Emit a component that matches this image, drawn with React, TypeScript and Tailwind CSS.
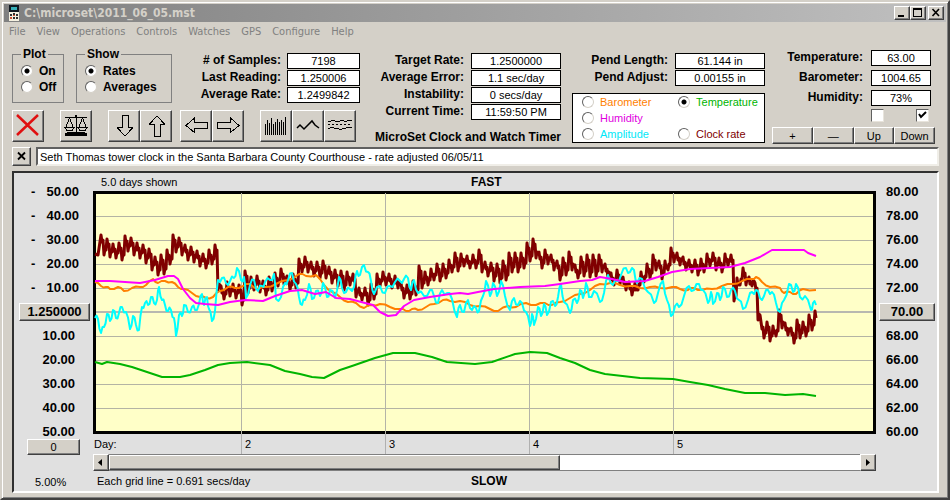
import React, { useState } from 'react';
import clsx from 'clsx';

const raised =
  'bg-[#d4d0c8] border border-t-white border-l-white border-r-[#404040] border-b-[#404040] shadow-[inset_-1px_-1px_0_#808080]';

const plainText = 'text-[11px] font-normal';

type Point = [number, number];

// [peak, trough] for every hour of the run
const clockRate: Point[] = [
  [235, 255], [239, 257], [244, 258], [243, 260], [236, 251], [238, 255], [243, 258], [245, 263],
  [249, 270], [257, 275], [255, 274], [250, 264], [235, 252], [238, 255], [245, 260], [247, 262],
  [251, 266], [254, 268], [250, 264], [245, 290], [286, 299], [282, 296], [284, 298], [285, 305],
  [271, 293], [277, 290], [276, 292], [281, 295], [277, 291], [273, 286], [269, 284], [276, 290],
  [274, 288], [259, 272], [257, 272], [262, 276], [262, 278], [261, 278], [267, 283], [270, 286],
  [271, 290], [272, 285], [274, 297], [288, 300], [288, 305], [284, 299], [274, 286], [272, 285],
  [274, 288], [276, 288], [283, 298], [285, 299], [281, 295], [266, 288], [272, 285], [269, 280],
  [264, 281], [264, 278], [260, 272], [253, 271], [254, 266], [256, 268], [255, 268], [250, 272],
  [262, 276], [263, 281], [264, 283], [261, 280], [253, 272], [253, 272], [253, 268], [243, 261],
  [239, 258], [252, 268], [250, 264], [255, 270], [261, 280], [258, 275], [252, 270], [265, 278],
  [257, 276], [255, 277], [255, 276], [255, 272], [264, 278], [273, 285], [270, 284], [277, 290],
  [282, 295], [283, 290], [272, 282], [264, 278], [255, 270], [261, 279], [261, 270], [248, 262],
  [253, 265], [257, 270], [260, 272], [260, 275], [259, 272], [254, 266], [253, 270], [258, 272],
  [254, 266], [255, 301], [278, 285], [268, 285], [277, 286], [283, 320], [322, 338], [322, 341],
  [326, 336], [310, 328], [323, 335], [328, 343], [320, 338], [322, 336], [315, 330], [311, 319],
];

const amplitude: Point[] = [
  [95, 318], [98, 319], [101, 333], [104, 327], [107, 314], [110, 321], [113, 310], [116, 318], [119, 313],
  [122, 307], [126, 312], [130, 329], [133, 316], [136, 325], [139, 330], [142, 307], [145, 303], [148, 305],
  [151, 297], [154, 303], [157, 300], [159, 287], [162, 300], [165, 305], [168, 311], [171, 310], [174, 318],
  [176, 336], [179, 315], [182, 316], [184, 305], [188, 312], [192, 307], [195, 310], [199, 304], [202, 294],
  [204, 305], [207, 297], [209, 309], [212, 321], [215, 311], [218, 280], [222, 278], [226, 283], [230, 281],
  [234, 278], [237, 268], [241, 280], [244, 277], [246, 298], [250, 285], [254, 280], [258, 291], [262, 286],
  [265, 282], [270, 280], [274, 274], [276, 299], [281, 297], [285, 283], [288, 280], [292, 273], [296, 284],
  [299, 297], [302, 305], [305, 300], [309, 284], [312, 299], [316, 291], [320, 296], [323, 283], [327, 297],
  [330, 290], [335, 298], [339, 277], [342, 288], [346, 292], [350, 289], [354, 287], [357, 271], [360, 275],
  [364, 265], [368, 272], [371, 281], [374, 294], [380, 286], [385, 293], [390, 286], [395, 282], [400, 281],
  [404, 279], [408, 278], [411, 290], [414, 280], [418, 293], [424, 296], [430, 290], [434, 296], [438, 303],
  [442, 290], [447, 293], [452, 299], [457, 317], [460, 305], [464, 312], [468, 300], [472, 310], [476, 308],
  [479, 311], [483, 296], [486, 281], [490, 296], [493, 283], [497, 296], [501, 281], [505, 296], [510, 310],
  [514, 298], [518, 305], [522, 303], [526, 312], [530, 326], [532, 314], [534, 325], [538, 307], [541, 316],
  [544, 304], [547, 315], [551, 302], [555, 306], [558, 297], [561, 284], [564, 302], [570, 313], [573, 300],
  [577, 303], [580, 290], [583, 298], [586, 283], [589, 297], [594, 291], [600, 302], [604, 293], [608, 275],
  [613, 285], [617, 281], [621, 275], [626, 268], [630, 272], [634, 270], [637, 283], [642, 279], [648, 292],
  [654, 303], [658, 293], [663, 281], [667, 300], [671, 316], [675, 306], [679, 307], [684, 296], [689, 286],
  [694, 290], [699, 284], [703, 290], [708, 303], [711, 292], [713, 304], [717, 293], [720, 300], [723, 287],
  [727, 297], [731, 290], [735, 291], [739, 300], [743, 309], [748, 300], [752, 292], [756, 290], [760, 298],
  [764, 296], [768, 290], [772, 292], [776, 303], [780, 312], [784, 300], [789, 284], [793, 292], [796, 284],
  [800, 297], [805, 296], [811, 310], [813, 303], [816, 305],
];

const barometer: Point[] = [
  [95, 282], [101, 286], [106, 287], [110, 289], [118, 287], [124, 291], [132, 288], [140, 287], [146, 285],
  [153, 279], [158, 283], [165, 281], [172, 282], [178, 287], [184, 289], [192, 293], [200, 297], [206, 298],
  [213, 297], [220, 291], [228, 287], [235, 288], [243, 286], [250, 284], [258, 289], [266, 287], [276, 284],
  [288, 280], [299, 274], [306, 276], [316, 275], [324, 285], [332, 292], [340, 297], [348, 302], [356, 303],
  [364, 308], [372, 305], [380, 304], [390, 307], [400, 309], [406, 311], [412, 309], [418, 310], [426, 307],
  [434, 304], [443, 300], [450, 301], [460, 301], [470, 305], [480, 306], [490, 309], [498, 311], [508, 306],
  [516, 307], [526, 303], [536, 305], [545, 303], [552, 305], [560, 302], [570, 298], [580, 294], [590, 290],
  [600, 284], [610, 283], [620, 285], [630, 286], [640, 288], [650, 287], [660, 288], [672, 287], [680, 289],
  [688, 290], [694, 288], [702, 290], [712, 289], [722, 286], [733, 284], [742, 281], [752, 279], [756, 277],
  [762, 282], [770, 287], [780, 288], [784, 293], [790, 292], [796, 294], [803, 289], [816, 290],
];

const humidity: Point[] = [
  [95, 281], [110, 281], [125, 282], [140, 283], [155, 280], [168, 276], [174, 276], [178, 279], [183, 289],
  [190, 298], [196, 303], [205, 304], [218, 305], [230, 302], [245, 300], [263, 301], [275, 296], [290, 291],
  [302, 290], [315, 294], [326, 292], [336, 298], [350, 299], [365, 303], [373, 305], [380, 312], [388, 316],
  [396, 315], [404, 306], [414, 300], [430, 297], [450, 294], [460, 293], [468, 294], [478, 292], [494, 289],
  [520, 287], [545, 286], [560, 284], [580, 281], [592, 280], [600, 277], [612, 279], [625, 282], [645, 281],
  [658, 277], [672, 272], [690, 269], [710, 268], [730, 267], [745, 263], [760, 257], [772, 250], [804, 250],
  [808, 253], [816, 256],
];

const temperature: Point[] = [
  [95, 362], [102, 364], [107, 362], [120, 364], [132, 367], [150, 373], [162, 377], [180, 377], [190, 375],
  [205, 370], [218, 365], [230, 363], [247, 362], [270, 365], [285, 371], [300, 374], [312, 377], [324, 378],
  [340, 370], [352, 366], [375, 358], [393, 353], [415, 353], [432, 357], [447, 362], [475, 364], [492, 362],
  [515, 354], [530, 352], [547, 353], [560, 358], [575, 363], [590, 370], [605, 374], [640, 378], [673, 379],
  [690, 382], [708, 385], [725, 389], [745, 393], [765, 393], [785, 395], [803, 394], [816, 396],
];

const clockPoints: Point[] = [[95, 254], [98, 255]];
clockRate.forEach(([peak, trough], i) => {
  const x = 101 + i * 6;
  clockPoints.push([x, peak], [x + 1, peak + 7], [x + 2, peak + 5], [x + 3, trough], [x + 4, trough - 6], [x + 5, trough - 5]);
});

// breaks every segment with a small kink
const roughen = (data: Point[], size: number): Point[] =>
  data.flatMap(([x, y], i) => {
    const next = data[i + 1];
    if (!next) return [[x, y] as Point];
    const kink = i % 2 ? size : -size;
    return [[x, y], [(x + next[0]) / 2, (y + next[1]) / 2 + kink]] as Point[];
  });

const series = [
  { name: 'Clock rate', color: '#800000', width: 3, data: clockPoints.filter(([x]) => x < 817) },
  { name: 'Barometer', color: '#ff8000', width: 2, data: roughen(barometer, 1) },
  { name: 'Amplitude', color: '#00ffff', width: 2, data: roughen(amplitude, 3) },
  { name: 'Humidity', color: '#ff00ff', width: 2, data: humidity },
  { name: 'Temperature', color: '#00b400', width: 2, data: temperature },
];

const channels = [
  { name: 'Barometer', className: 'text-[#ff8000]' },
  { name: 'Temperature', className: 'text-[#00b400]' },
  { name: 'Humidity', className: 'text-[#e000e0]' },
  null,
  { name: 'Amplitude', className: 'text-[#00e8f8]' },
  { name: 'Clock rate', className: 'text-[#800000]' },
];

const menu = ['File', 'View', 'Operations', 'Controls', 'Watches', 'GPS', 'Configure', 'Help'];

const tools = [
  {
    label: 'Stop',
    gap: 'mr-4',
    icon: <path d="M4 4 L25 24 M25 4 L4 24" stroke="#e01010" strokeWidth="2.5" shapeRendering="auto" />,
  },
  {
    label: 'Balance',
    gap: 'mr-4',
    icon: (
      <g stroke="#000">
        <path d="M4 6.5 H14 L15 4 L16 6.5 H26 M15 4 V21 M8.5 7 L4.5 17 M8.5 7 L12.5 17 M21.5 7 L17.5 17 M21.5 7 L25.5 17" />
        <path d="M4 16.5 H13 L11 19.5 H6 Z M17 16.5 H26 L24 19.5 H19 Z" />
        <path d="M6 21 H24 V22 H26 V25 H4 V22 H6 Z" fill="#000" stroke="none" />
      </g>
    ),
  },
  {
    label: 'Shift down',
    gap: '',
    icon: <path d="M13 4.5 H19 V16.5 H23.5 V17 L16 25 L8.5 17 V16.5 H13 Z" stroke="#000" />,
  },
  {
    label: 'Shift up',
    gap: 'mr-2',
    icon: <path d="M13 25.5 H19 V13.5 H23.5 V13 L16 5 L8.5 13 V13.5 H13 Z" stroke="#000" />,
  },
  {
    label: 'Shift left',
    gap: '',
    icon: <path d="M26.5 11.5 V17.5 H13.5 V21.5 L5 14.5 L13.5 7 V11.5 Z" stroke="#000" />,
  },
  {
    label: 'Shift right',
    gap: 'mr-4',
    icon: <path d="M4.5 11.5 V17.5 H17.5 V21.5 L26 14.5 L17.5 7 V11.5 Z" stroke="#000" />,
  },
  {
    label: 'Bars',
    gap: '',
    icon: (
      <path
        d="M4.5 24 V13 M6.5 24 V9 M8.5 24 V12 M10.5 24 V7 M12.5 24 V13 M14.5 24 V11 M16.5 24 V8 M18.5 24 V11 M20.5 24 V9 M22.5 24 V11 M24.5 24 V6"
        stroke="#000"
      />
    ),
  },
  {
    label: 'Line',
    gap: '',
    icon: <path d="M4 17 L7 14 L11 18 L19 10 L22 14 L26 17" stroke="#000" strokeWidth="1.5" shapeRendering="auto" />,
  },
  {
    label: 'Bands',
    gap: '',
    icon: (
      <path
        d="M3 10.5 H6 M6 9.5 H10 M10 10.5 H15 M15 9.5 H19 M19 10.5 H22 M22 9.5 H27 M3 17.5 H5 M5 16.5 H9 M9 17.5 H14 M14 18.5 H17 M17 17.5 H21 M21 16.5 H27 M3 13.5 H5 M7 13.5 H9 M11 13.5 H13 M15 13.5 H17 M19 13.5 H21 M23 13.5 H25"
        stroke="#000"
      />
    ),
  },
];

function Radio({ name, label, checked, onChange, className }: {
  name: string;
  label: string;
  checked: boolean;
  onChange: () => void;
  className?: string;
}) {
  return (
    <label className={clsx('flex h-4 items-center gap-[6px] whitespace-nowrap', className)}>
      <input
        type="radio"
        name={name}
        checked={checked}
        onChange={onChange}
        className="h-3 w-3 shrink-0 appearance-none rounded-full border border-t-[#606060] border-l-[#606060] border-r-[#d4d0c8] border-b-[#d4d0c8] bg-white checked:bg-[radial-gradient(circle,#000_2px,#fff_3px)]"
      />
      {label}
    </label>
  );
}

function Readouts({ rows, className }: { rows: [string, string][]; className: string }) {
  return (
    <div className={clsx('grid auto-rows-[16px] justify-end', className)}>
      {rows.map(([label, value]) => {
        const id = label.replace(/\W+/g, '-').toLowerCase();
        return (
          <React.Fragment key={label}>
            <label htmlFor={id} className="text-right font-bold leading-[14px] whitespace-nowrap">
              {label}
            </label>
            <output id={id} className={clsx('border border-black bg-white text-center leading-[14px] whitespace-nowrap', plainText)}>
              {value}
            </output>
          </React.Fragment>
        );
      })}
    </div>
  );
}

function TitleBar() {
  return (
    <header className="flex h-[18px] items-center bg-linear-to-r from-[#808080] to-[#c0c0c0] pr-[2px] pl-1">
      <svg width="12" height="16" viewBox="0 0 12 16" shapeRendering="crispEdges" aria-hidden="true">
        <path d="M1 0 H11 V16 H1 Z" fill="#f4f0e0" />
        <path d="M1 0 H11 V7 H1 Z" fill="#101820" />
        <path d="M3 2 H9 V5 H3 Z" fill="#38b0b8" />
        <path d="M2 9 H4 V11 H2 Z M5 8 H7 V10 H5 Z M8 9 H10 V11 H8 Z M5 12 H7 V14 H5 Z M8 12 H10 V14 H8 Z" fill="#303030" />
        <path d="M2 12 H4 V14 H2 Z M5 10 H7 V11 H5 Z" fill="#d05030" />
      </svg>
      <h1 className="ml-1 flex-1 font-['DejaVu_Sans_Condensed','DejaVu_Sans',sans-serif] text-xs font-bold text-[#d4d0c8]">
        C:\microset\2011_06_05.mst
      </h1>
      <button aria-label="Minimize" className={clsx('h-[14px] w-4', raised)}>
        <svg viewBox="0 0 14 12" shapeRendering="crispEdges">
          <path d="M3 8 H9 V10 H3 Z" />
        </svg>
      </button>
      <button aria-label="Maximize" className={clsx('h-[14px] w-4', raised)}>
        <svg viewBox="0 0 14 12" shapeRendering="crispEdges">
          <path d="M2 1 H11 V10 H2 Z M3 3 V9 H10 V3 Z" fillRule="evenodd" />
        </svg>
      </button>
      <button aria-label="Close" className={clsx('ml-[2px] h-[14px] w-4', raised)}>
        <svg viewBox="0 0 14 12">
          <path d="M3.5 2 L10 9 M10 2 L3.5 9" stroke="#000" strokeWidth="1.6" />
        </svg>
      </button>
    </header>
  );
}

function Checkbox({ label, defaultChecked }: { label: string; defaultChecked?: boolean }) {
  return (
    <span className="relative block h-[13px] w-[13px]">
      <input
        type="checkbox"
        aria-label={label}
        defaultChecked={defaultChecked}
        className="peer block h-full w-full appearance-none border border-t-[#606060] border-l-[#606060] border-r-[#e8e4dc] border-b-[#e8e4dc] bg-white"
      />
      <svg viewBox="0 0 13 13" className="pointer-events-none absolute inset-0 hidden peer-checked:block">
        <path d="M3 5 L5 8 L10 3" fill="none" stroke="#000" strokeWidth="2" />
      </svg>
    </span>
  );
}

function Plot() {
  return (
    <svg viewBox="93 191 783 243" preserveAspectRatio="none" className="block h-[243px] w-full" role="img" aria-label="Clock rate over five days">
      <g shapeRendering="crispEdges">
        <rect x="93" y="191" width="783" height="243" fill="#000" />
        <rect x="96" y="194" width="777" height="237" fill="#ffffc8" />
        {[216, 240, 264, 288, 336, 360, 384, 408].map(y => (
          <rect key={y} x="96" y={y} width="777" height="1" fill="#b4b4a4" />
        ))}
        <rect x="96" y="311" width="777" height="2" fill="#b8b8b0" />
        {[241, 385, 529, 673].map(x => (
          <rect key={x} x={x} y="193" width="1" height="241" fill="#b4b4a8" />
        ))}
      </g>
      {series.map(line => (
        <polyline
          key={line.name}
          points={line.data.map(p => p.join(',')).join(' ')}
          fill="none"
          stroke={line.color}
          strokeWidth={line.width}
          strokeLinejoin="round"
          vectorEffect="non-scaling-stroke"
        />
      ))}
    </svg>
  );
}

function Scale({ side }: { side: 'left' | 'right' }) {
  const left = side === 'left';
  return (
    <div className="flex flex-col pt-[7px] text-[13px] font-bold">
      {[5, 4, 3, 2, 1, 0, -1, -2, -3, -4, -5].map(n => {
        if (n === 0) {
          return (
            <div key={n} className={clsx('flex h-6 items-center', left ? 'pr-[3px] pl-[5px]' : 'pr-[2px] pl-[3px]')}>
              <button className={clsx('h-[18px] flex-1 text-center leading-4', raised)}>
                {left ? '1.250000' : '70.00'}
              </button>
            </div>
          );
        }
        return (
          <div
            key={n}
            className={clsx(
              'flex leading-[14px]',
              n === -5 ? 'h-[19px] items-end' : 'h-6 items-center',
              left ? 'justify-between pl-[17px]' : 'pl-[10px]',
              left && (n > 0 ? 'pr-[14px]' : 'pr-[18px]')
            )}
          >
            {left && <span>{n > 0 ? '-' : ''}</span>}
            <span>{left ? `${Math.abs(n) * 10}.00` : `${70 + n * 2}.00`}</span>
          </div>
        );
      })}
      {left && (
        <>
          <button className={clsx('mr-[13px] ml-[13px] h-4 text-center leading-[14px]', raised, plainText)}>0</button>
          <span className={clsx('mt-5 pl-[21px] leading-[14px]', plainText)}>5.00%</span>
        </>
      )}
    </div>
  );
}

function App() {
  const [plot, setPlot] = useState('On');
  const [show, setShow] = useState('Rates');
  const [channel, setChannel] = useState('Temperature');
  const [note, setNote] = useState('Seth Thomas tower clock in the Santa Barbara County Courthouse - rate adjusted 06/05/11');

  return (
    <div className="border-2 border-t-[#d4d0c8] border-l-[#d4d0c8] border-r-[#404040] border-b-[#404040] bg-[#d4d0c8] p-[2px] font-['Liberation_Sans',Arial,sans-serif] text-xs text-black shadow-[inset_1px_1px_0_#fff,inset_-1px_-1px_0_#808080]">
      <TitleBar />

      <nav className="flex h-5 items-center gap-[11px] pl-[5px] font-['DejaVu_Sans_Condensed','DejaVu_Sans',sans-serif] text-[11px] text-[#808080]">
        {menu.map(item => (
          <button key={item}>{item}</button>
        ))}
      </nav>

      <main className="pt-[6px] pr-[7px] pb-[3px] pl-2">
        <div className="flex items-start justify-between pr-1">
          <section className="pr-2">
            <div className="flex h-[55px]">
              <fieldset className="mr-3 w-[52px] border border-[#808080] pt-[3px] pl-2 font-bold">
                <legend className="px-[2px] leading-3">Plot</legend>
                {['On', 'Off'].map(o => (
                  <Radio key={o} name="plot" label={o} checked={plot === o} onChange={() => setPlot(o)} />
                ))}
              </fieldset>
              <fieldset className="w-24 border border-[#808080] pt-[3px] pl-2 font-bold">
                <legend className="px-[2px] leading-3">Show</legend>
                {['Rates', 'Averages'].map(o => (
                  <Radio key={o} name="show" label={o} checked={show === o} onChange={() => setShow(o)} />
                ))}
              </fieldset>
              <Readouts
                className="w-[188px] grid-cols-[auto_73px] gap-x-[6px] gap-y-px pt-[5px]"
                rows={[['# of Samples:', '7198'], ['Last Reading:', '1.250006'], ['Average Rate:', '1.2499842']]}
              />
            </div>
            <div className="mt-[7px] flex">
              {tools.map(tool => (
                <button key={tool.label} aria-label={tool.label} className={clsx('h-8 w-8', raised, tool.gap)}>
                  <svg viewBox="0 0 30 30" fill="none" shapeRendering="crispEdges">
                    {tool.icon}
                  </svg>
                </button>
              ))}
            </div>
          </section>

          <section className="pt-[5px] pr-1">
            <Readouts
              className="grid-cols-[auto_90px] gap-x-[7px] gap-y-px"
              rows={[
                ['Target Rate:', '1.2500000'],
                ['Average Error:', '1.1 sec/day'],
                ['Instability:', '0 secs/day'],
                ['Current Time:', '11:59:50 PM'],
              ]}
            />
            <h2 className="mt-[10px] leading-[14px] font-bold whitespace-nowrap">MicroSet Clock and Watch Timer</h2>
          </section>

          <section className="w-[193px] pt-[5px]">
            <Readouts
              className="grid-cols-[auto_90px] gap-x-[7px] gap-y-px"
              rows={[['Pend Length:', '61.144 in'], ['Pend Adjust:', '0.00155 in']]}
            />
            <div className={clsx('mt-[7px] grid grid-cols-[96px_1fr] border border-black bg-white pl-[9px]', plainText)}>
              {channels.map((c, i) =>
                c ? (
                  <Radio
                    key={c.name}
                    name="channel"
                    label={c.name}
                    className={c.className}
                    checked={channel === c.name}
                    onChange={() => setChannel(c.name)}
                  />
                ) : (
                  <span key={i} />
                )
              )}
            </div>
          </section>

          <section className="w-[163px] pt-[2px]">
            <Readouts
              className="grid-cols-[auto_60px] gap-x-2 gap-y-1 pr-1"
              rows={[['Temperature:', '63.00'], ['Barometer:', '1004.65'], ['Humidity:', '73%']]}
            />
            <div className="mt-[3px] flex justify-end gap-8 pr-[6px]">
              <Checkbox label="Auto up" />
              <Checkbox label="Auto down" defaultChecked />
            </div>
            <div className="mt-[5px] grid grid-cols-4">
              {['+', '—', 'Up', 'Down'].map(b => (
                <button key={b} className={clsx('h-[17px] text-center leading-[14px]', raised, plainText)}>
                  {b}
                </button>
              ))}
            </div>
          </section>
        </div>

        <div className="mt-[3px] flex h-[19px] gap-[5px]">
          <button aria-label="Clear note" className={clsx('w-[19px]', raised)}>
            <svg viewBox="0 0 17 17">
              <path d="M5 4.5 L12 11.5 M12 4.5 L5 11.5" stroke="#000" strokeWidth="1.8" />
            </svg>
          </button>
          <input
            aria-label="Note"
            value={note}
            onChange={e => setNote(e.target.value)}
            className={clsx(
              'min-w-0 flex-1 border-2 border-t-[#606060] border-l-[#606060] border-r-[#f0eee8] border-b-[#f0eee8] bg-white px-[2px] leading-[14px] outline-none',
              plainText
            )}
          />
        </div>

        <div className="mt-[5px] grid grid-cols-[79px_1fr_61px] border-2 border-t-[#303030] border-l-[#303030] border-r-white border-b-white bg-[#e0e0e0]">
          <Scale side="left" />
          <div className={plainText}>
            <div className="grid h-[18px] grid-cols-[378fr_405fr] items-center leading-[14px]">
              <span className="pl-2">5.0 days shown</span>
              <b className="text-xs leading-[14px]">FAST</b>
            </div>
            <Plot />
            <div className="grid h-5 grid-cols-[148fr_144fr_144fr_144fr_203fr] leading-5">
              <span className="pl-px">Day:</span>
              {[2, 3, 4, 5].map(d => (
                <span key={d} className="mb-[2px] border-l border-[#b0b0b0] pl-[3px]">
                  {d}
                </span>
              ))}
            </div>
            <div className="flex h-[17px]">
              <button aria-label="Scroll left" className={clsx('w-4', raised)}>
                <svg viewBox="0 0 14 15">
                  <path d="M8 4 V11 L4 7.5 Z" />
                </svg>
              </button>
              <div className="flex-1 border-y border-[#808080] bg-white">
                <div className={clsx('h-full w-[60%]', raised)} />
              </div>
              <button aria-label="Scroll right" className={clsx('w-4', raised)}>
                <svg viewBox="0 0 14 15">
                  <path d="M5 4 V11 L9 7.5 Z" />
                </svg>
              </button>
            </div>
            <div className="grid h-5 grid-cols-[378fr_405fr] items-center leading-[14px]">
              <span className="pl-1">Each grid line = 0.691 secs/day</span>
              <b className="text-xs leading-[14px]">SLOW</b>
            </div>
          </div>
          <Scale side="right" />
        </div>
      </main>
    </div>
  );
}

export default App;
